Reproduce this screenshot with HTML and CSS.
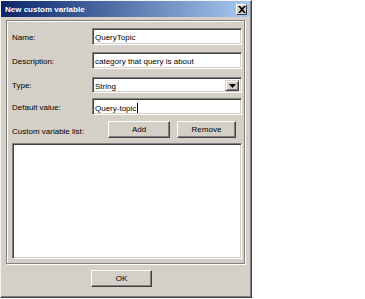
FILE: index.html
```html
<!DOCTYPE html>
<html>
<head>
  <meta charset="utf-8">
  <title>New custom variable</title>
  <link rel="stylesheet" href="styles.css">
</head>
<body>
  <div class='window'>
    <div class='titlebar'>
      <span class='title'>New custom variable</span>
      <div class='close'>
        <svg width="8" height="7" viewBox="0 0 8 7"><path d="M0 0h2l2 2 2-2h2L5 3.5 8 7H6L4 5 2 7H0l3-3.5z" fill="#000"/></svg>
      </div>
    </div>

    <div class='group'>
      <div class='row'>
        <span class='label'>Name:</span>
        <div class='field'>QueryTopic</div>
      </div>
      <div class='row'>
        <span class='label'>Description:</span>
        <div class='field'>category that query is about</div>
      </div>
      <div class='row row-type'>
        <span class='label'>Type:</span>
        <div class='field combo'>
          <span>String</span>
          <div class='drop'>
            <svg width="7" height="4" viewBox="0 0 7 4"><path d="M0 0h7L3.5 4z" fill="#000"/></svg>
          </div>
        </div>
      </div>
      <div class='row'>
        <span class='label'>Default value:</span>
        <div class='field'>Query-topic<span class='caret'></span></div>
      </div>
      <div class='row row-list'>
        <span class='label list-label'>Custom variable list:</span>
        <button class='btn btn-add'>Add</button>
        <button class='btn btn-remove'>Remove</button>
      </div>
      <div class='listbox'></div>
    </div>

    <div class='footer'>
      <button class='btn btn-ok'>OK</button>
    </div>
  </div>
</body>
</html>
```

FILE: styles.css
```css
body {
  margin: 0;
  padding: 0;
  background-color: #FFFFFF;
  font-family: 'Liberation Sans', Arial, sans-serif;
  font-size: 8px;
  color: #000000;
}
.window {
  width: 252px;
  height: 298px;
  box-sizing: border-box;
  background-color: #D4D0C8;
  border: 1px solid;
  border-color: #F4F3EE #404040 #404040 #F4F3EE;
  box-shadow: inset -1px -1px #808080;
}
.titlebar {
  height: 16px;
  margin-right: 1px;
  display: flex;
  align-items: center;
  justify-content: space-between;
  padding: 0 3px 0 4px;
  background: linear-gradient(to right, #0A246A, #A6CAF0);
}
.title {
  color: #FFFFFF;
  font-weight: bold;
  font-size: 8px;
}
.close {
  width: 11px;
  height: 11px;
  box-sizing: border-box;
  display: flex;
  align-items: center;
  justify-content: center;
  background-color: #D4D0C8;
  border: 1px solid;
  border-color: #FFFFFF #404040 #404040 #FFFFFF;
}
.group {
  margin: 3px 6px 0 5px;
  height: 244px;
  box-sizing: border-box;
  border: 1px solid #808080;
  box-shadow: 1px 1px #FFFFFF, inset 1px 1px #FFFFFF;
  padding: 7px 2px 4px 5px;
  display: flex;
  flex-direction: column;
}
.row {
  display: flex;
  align-items: center;
  height: 17px;
  margin-bottom: 7px;
}
.label {
  width: 80px;
  flex: none;
  padding-top: 1px;
}
.field {
  flex: 1;
  height: 17px;
  box-sizing: border-box;
  background-color: #FFFFFF;
  border: 1px solid;
  border-color: #808080 #FFFFFF #FFFFFF #808080;
  box-shadow: inset 1px 1px #404040, inset -1px -1px #D4D0C8;
  padding: 4px 0 0 2px;
  white-space: nowrap;
  overflow: hidden;
}
.caret {
  display: inline-block;
  width: 1px;
  height: 10px;
  margin-left: 1px;
  vertical-align: -2px;
  background-color: #000000;
}
.row-type {
  height: 16px;
  margin-top: 1px;
  margin-bottom: 5px;
}
.combo {
  height: 16px;
  display: flex;
  justify-content: space-between;
  padding: 2px 2px 2px 2px;
}
.combo span {
  padding-top: 2px;
}
.drop {
  width: 14px;
  height: 11px;
  box-sizing: border-box;
  display: flex;
  align-items: center;
  justify-content: center;
  background-color: #D4D0C8;
  border: 1px solid;
  border-color: #D4D0C8 #404040 #404040 #D4D0C8;
  box-shadow: inset 1px 1px #FFFFFF, inset -1px -1px #808080;
}
.row-list {
  margin-top: -1px;
  margin-bottom: 5px;
}
.list-label {
  width: 96px;
  padding-top: 3px;
}
.btn {
  height: 17px;
  box-sizing: border-box;
  font-family: 'Liberation Sans', Arial, sans-serif;
  font-size: 8px;
  color: #000000;
  background-color: #D4D0C8;
  border: 1px solid;
  border-color: #FFFFFF #404040 #404040 #FFFFFF;
  box-shadow: inset -1px -1px #808080;
  padding: 0;
}
.btn-add {
  width: 62px;
  margin-right: 7px;
}
.btn-remove {
  width: 59px;
}
.listbox {
  flex: 1;
  background-color: #FFFFFF;
  border: 1px solid;
  border-color: #808080 #FFFFFF #FFFFFF #808080;
  box-shadow: inset 1px 1px #404040, inset -1px -1px #D4D0C8;
}
.footer {
  padding: 6px 0 0 90px;
}
.btn-ok {
  width: 61px;
  height: 17px;
}
```
